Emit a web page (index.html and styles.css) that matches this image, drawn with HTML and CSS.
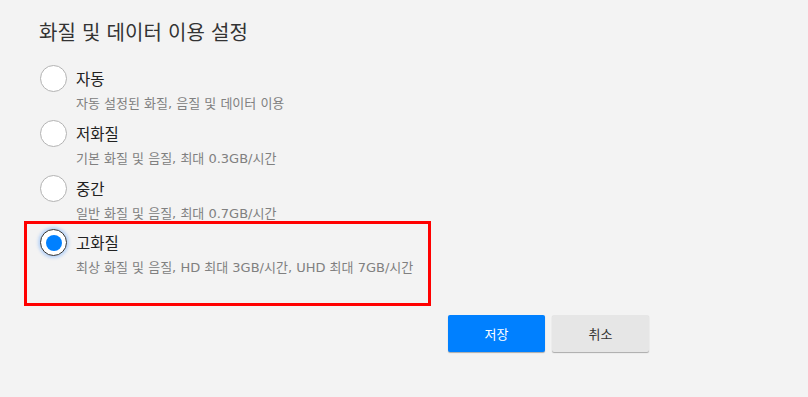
FILE: index.html
```html
<!DOCTYPE html>
<html lang="ko">
<head>
<meta charset="utf-8">
<link rel="stylesheet" href="styles.css">
</head>
<body>
<div class="page">
  <h1 class="title">화질 및 데이터 이용 설정</h1>
  <div class="options">
    <div class="option">
      <span class="radio"></span>
      <div class="texts">
        <div class="label">자동</div>
        <div class="desc">자동 설정된 화질, 음질 및 데이터 이용</div>
      </div>
    </div>
    <div class="option">
      <span class="radio"></span>
      <div class="texts">
        <div class="label">저화질</div>
        <div class="desc">기본 화질 및 음질, 최대 0.3GB/시간</div>
      </div>
    </div>
    <div class="option">
      <span class="radio"></span>
      <div class="texts">
        <div class="label">중간</div>
        <div class="desc">일반 화질 및 음질, 최대 0.7GB/시간</div>
      </div>
    </div>
    <div class="option selected highlight">
      <span class="radio checked"></span>
      <div class="texts">
        <div class="label">고화질</div>
        <div class="desc">최상 화질 및 음질, HD 최대 3GB/시간, UHD 최대 7GB/시간</div>
      </div>
    </div>
  </div>
  <div class="buttons">
    <button class="btn primary">저장</button>
    <button class="btn secondary">취소</button>
  </div>
</div>
</body>
</html>
```
FILE: styles.css
```css
html, body {
  margin: 0;
  padding: 0;
  background: #f3f3f3;
  font-family: "Noto Sans CJK KR", sans-serif;
}
.page {
  width: 808px;
  height: 397px;
  padding: 17px 0 0 0;
  box-sizing: border-box;
}
.title {
  margin: 0 0 0 39px;
  font-family: "Noto Sans CJK KR", sans-serif;
  font-size: 20px;
  font-weight: 400;
  color: #333;
  line-height: 30px;
  letter-spacing: 0.2px;
}
.options {
  margin-top: 17px;
  display: flex;
  flex-direction: column;
}
.option {
  display: flex;
  align-items: flex-start;
  margin-left: 40px;
  height: 55px;
}
.option.highlight {
  margin-left: 24px;
  width: 388px;
  height: 75px;
  border: 3px solid #ff0000;
  padding: 4px 0 0 13px;
  margin-top: -8px;
}
.radio {
  width: 27px;
  height: 27px;
  box-sizing: border-box;
  border: 1px solid #b3b3b3;
  border-radius: 50%;
  background: #fff;
  flex: none;
  margin-right: 9px;
  margin-top: 1px;
}
.radio.checked {
  border: 1px solid #333;
  box-shadow: 0 0 3px 2px rgba(90, 160, 255, 0.35);
  position: relative;
}
.radio.checked::after {
  content: "";
  position: absolute;
  left: 4.5px;
  top: 4.5px;
  width: 16px;
  height: 16px;
  border-radius: 50%;
  background: #0080ff;
}
.texts {
  display: flex;
  flex-direction: column;
}
.label {
  font-size: 15.5px;
  line-height: 24px;
  color: #222;
  margin-top: 2px;
}
.desc {
  font-family: "DejaVu Sans", "Noto Sans CJK KR", sans-serif;
  font-size: 13px;
  line-height: 20px;
  color: #808080;
  margin-top: 4px;
}
.buttons {
  display: flex;
  gap: 7px;
  margin: 9px 0 0 448px;
}
.btn {
  width: 97px;
  height: 37px;
  border: none;
  border-radius: 2px;
  font-family: "Noto Sans CJK KR", sans-serif;
  font-size: 13px;
  padding: 0;
  box-shadow: 0 1px 1px rgba(0, 0, 0, 0.3);
}
.primary {
  background: #0080ff;
  color: #fff;
}
.secondary {
  background: #e6e6e6;
  color: #333;
}
```
